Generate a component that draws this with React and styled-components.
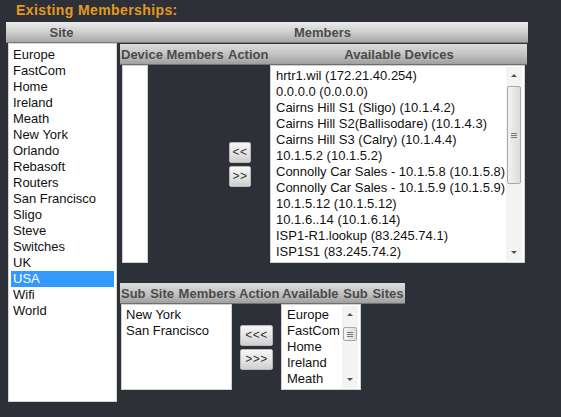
import styled, { createGlobalStyle } from "styled-components"

const sites = ["Europe", "FastCom", "Home", "Ireland", "Meath", "New York", "Orlando", "Rebasoft", "Routers", "San Francisco", "Sligo", "Steve", "Switches", "UK", "USA", "Wifi", "World"]

const devices = [
  "hrtr1.wil (172.21.40.254)",
  "0.0.0.0 (0.0.0.0)",
  "Cairns Hill S1 (Sligo) (10.1.4.2)",
  "Cairns Hill S2(Ballisodare) (10.1.4.3)",
  "Cairns Hill S3 (Calry) (10.1.4.4)",
  "10.1.5.2 (10.1.5.2)",
  "Connolly Car Sales - 10.1.5.8 (10.1.5.8)",
  "Connolly Car Sales - 10.1.5.9 (10.1.5.9)",
  "10.1.5.12 (10.1.5.12)",
  "10.1.6..14 (10.1.6.14)",
  "ISP1-R1.lookup (83.245.74.1)",
  "ISP1S1 (83.245.74.2)"
]

const subMembers = ["New York", "San Francisco"]
const subAvailable = ["Europe", "FastCom", "Home", "Ireland", "Meath"]

const GlobalStyle = createGlobalStyle`
  html, body {
    margin: 0;
    background: #2e3037;
  }
  body {
    font-family: "Liberation Sans", Arial, sans-serif;
  }
`

const Scrollbar = ({ thumbTop, thumbHeight }) => (
  <ScrollTrack>
    <ScrollArrow $up />
    <ScrollRail>
      <ScrollThumb style={{ marginTop: thumbTop, height: thumbHeight }}>
        <Grip />
      </ScrollThumb>
    </ScrollRail>
    <ScrollArrow />
  </ScrollTrack>
)

const App = () => {
  return (
    <Page>
      <GlobalStyle />
      <Title>Existing Memberships:</Title>
      <Table>
        <HeadRow>
          <HeadCell $w={111}>Site</HeadCell>
          <HeadCell $w={411}>Members</HeadCell>
        </HeadRow>
        <BodyRow>
          <SiteList>
            {sites.map((site) => (
              <Option key={site} $selected={site === "USA"}>{site}</Option>
            ))}
          </SiteList>
          <MembersCell>
            <SubTable>
              <HeadRow>
                <InnerHead $w={107} $align="left">Device Members</InnerHead>
                <InnerHead $w={43} $align="left">Action</InnerHead>
                <InnerHead $w={257}>Available Devices</InnerHead>
              </HeadRow>
              <DeviceRow>
                <ListBox $w={26} $h={198} $ml={2} />
                <ActionCell $w={122} $pl={81}>
                  <ActionButton $w={22}>&lt;&lt;</ActionButton>
                  <ActionButton $w={22}>&gt;&gt;</ActionButton>
                </ActionCell>
                <ListBox $w={255} $h={198}>
                  <Options>
                    {devices.map((d) => (
                      <Option key={d}>{d}</Option>
                    ))}
                  </Options>
                  <Scrollbar thumbTop={2} thumbHeight={98} />
                </ListBox>
              </DeviceRow>
            </SubTable>
            <SubTable $mt={20}>
              <HeadRow>
                <InnerHead $w={118} $align="left" $ws={1}>Sub Site Members</InnerHead>
                <InnerHead $w={43} $align="left">Action</InnerHead>
                <InnerHead $w={124} $align="left" $ws={1}>Available Sub Sites</InnerHead>
              </HeadRow>
              <DeviceRow>
                <ListBox $w={111} $h={86} $ml={1}>
                  <Options $pl={2}>
                    {subMembers.map((s) => (
                      <Option key={s}>{s}</Option>
                    ))}
                  </Options>
                </ListBox>
                <ActionCell $w={49} $pl={8}>
                  <ActionButton $w={33}>&lt;&lt;&lt;</ActionButton>
                  <ActionButton $w={33}>&gt;&gt;&gt;</ActionButton>
                </ActionCell>
                <ListBox $w={80} $h={86}>
                  <Options>
                    {subAvailable.map((s) => (
                      <Option key={s}>{s}</Option>
                    ))}
                  </Options>
                  <Scrollbar thumbTop={4} thumbHeight={14} />
                </ListBox>
              </DeviceRow>
            </SubTable>
          </MembersCell>
        </BodyRow>
      </Table>
    </Page>
  )
}

const Page = styled.div`
  width: 561px;
  height: 417px;
  box-sizing: border-box;
  padding: 1px 0 0 6px;
  background: #2e3037;
  overflow: hidden;
`

const Title = styled.div`
  height: 21px;
  padding-left: 10px;
  font-size: 14px;
  font-weight: bold;
  letter-spacing: 0.4px;
  color: #e49a1c;
  line-height: 18px;
`

const Table = styled.div`
  display: flex;
  flex-direction: column;
  width: 522px;
`

const HeadRow = styled.div`
  display: flex;
`

const HeadCell = styled.div`
  width: ${(p) => p.$w}px;
  height: 21px;
  line-height: 21px;
  text-align: center;
  font-size: 13px;
  font-weight: bold;
  color: #4b4b4b;
  background: linear-gradient(to bottom, #ececec 0%, #d0d0d0 45%, #a4a4a4 100%);
  box-shadow: inset 0 -1px 0 #7c7c7c;
`

const InnerHead = styled.div`
  width: ${(p) => p.$w}px;
  height: 21px;
  line-height: 21px;
  box-sizing: border-box;
  padding-left: 1px;
  text-align: ${(p) => p.$align || "center"};
  font-size: 13px;
  font-weight: bold;
  word-spacing: ${(p) => p.$ws || 0}px;
  color: #4b4b4b;
  white-space: nowrap;
  background: linear-gradient(to bottom, #dcdcdc 0%, #c2c2c2 50%, #9c9c9c 100%);
  box-shadow: inset 0 -1px 0 #6f6f6f;
`

const BodyRow = styled.div`
  display: flex;
  align-items: flex-start;
`

const SiteList = styled.div`
  width: 109px;
  height: 359px;
  margin-left: 2px;
  box-sizing: border-box;
  padding: 3px 2px;
  background: #fff;
  border: 1px solid #d4d4d4;
`

const Option = styled.div`
  height: 16px;
  line-height: 16px;
  padding-left: 2px;
  font-size: 13px;
  white-space: nowrap;
  color: ${(p) => (p.$selected ? "#fff" : "#111")};
  background: ${(p) => (p.$selected ? "#3399ff" : "transparent")};
`

const MembersCell = styled.div`
  display: flex;
  flex-direction: column;
  margin-left: 3px;
  margin-top: 1px;
`

const SubTable = styled.div`
  display: flex;
  flex-direction: column;
  margin-top: ${(p) => p.$mt || 0}px;
  align-self: flex-start;
`

const DeviceRow = styled.div`
  display: flex;
  align-items: stretch;
`

const ListBox = styled.div`
  width: ${(p) => p.$w}px;
  height: ${(p) => p.$h}px;
  margin-left: ${(p) => p.$ml || 0}px;
  box-sizing: border-box;
  display: flex;
  justify-content: space-between;
  background: #fff;
  border: 1px solid #d0d0d0;
  overflow: hidden;
`

const Options = styled.div`
  padding: 2px 0 0 ${(p) => p.$pl || 3}px;
  overflow: hidden;
`

const ActionCell = styled.div`
  width: ${(p) => p.$w}px;
  box-sizing: border-box;
  padding-left: ${(p) => p.$pl}px;
  display: flex;
  flex-direction: column;
  justify-content: center;
  gap: 3px;
`

const ActionButton = styled.button`
  width: ${(p) => p.$w}px;
  height: 21px;
  padding: 0;
  font-family: "Liberation Sans", Arial, sans-serif;
  font-size: 12px;
  color: #333;
  letter-spacing: 0.5px;
  border: 1px solid #b8b8b8;
  border-radius: 2px;
  background: linear-gradient(to bottom, #f6f6f6 0%, #e2e2e2 60%, #cfcfcf 100%);
`

const ScrollTrack = styled.div`
  flex: none;
  width: 16px;
  margin: 1px 2px 1px 0;
  display: flex;
  flex-direction: column;
  background: #f3f3f3;
`

const ScrollArrow = styled.div`
  height: 17px;
  flex: none;
  display: flex;
  align-items: center;
  justify-content: center;

  &::before {
    content: "";
    border-left: 3px solid transparent;
    border-right: 3px solid transparent;
    ${(p) => (p.$up ? "border-bottom: 3px solid #555;" : "border-top: 3px solid #555;")}
  }
`

const ScrollRail = styled.div`
  flex: 1;
  display: flex;
  flex-direction: column;
`

const ScrollThumb = styled.div`
  box-sizing: border-box;
  margin: 0 1px;
  border: 1px solid #a9a9a9;
  border-radius: 2px;
  background: linear-gradient(to right, #f2f2f2, #dcdcdc);
  display: flex;
  align-items: center;
  justify-content: center;
`

const Grip = styled.div`
  width: 6px;
  height: 5px;
  background: repeating-linear-gradient(to bottom, #777 0 1px, transparent 1px 2px);
`

export default App
